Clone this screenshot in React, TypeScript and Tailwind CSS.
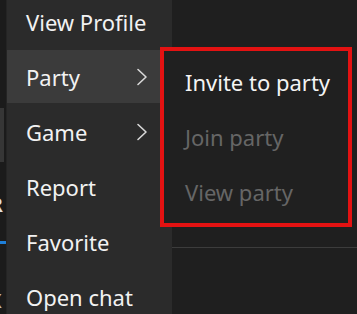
import React from "react";

const Chevron = () => (
  <svg width="12" height="18" viewBox="0 0 12 18" fill="none" className="shrink-0">
    <path d="M2 1.5 L10 9 L2 16.5" stroke="#d8d8d8" strokeWidth="1.6" strokeLinecap="round" strokeLinejoin="round" />
  </svg>
);

const font = { fontFamily: '"Noto Sans", "Open Sans", sans-serif' };

export default function App() {
  const items: { label: string; chevron?: boolean; active?: boolean }[] = [
    { label: "View Profile" },
    { label: "Party", chevron: true, active: true },
    { label: "Game", chevron: true },
    { label: "Report" },
    { label: "Favorite" },
    { label: "Open chat" },
  ];
  const sub = [
    { label: "Invite to party", enabled: true },
    { label: "Join party", enabled: false },
    { label: "View party", enabled: false },
  ];
  return (
    <div className="relative w-[357px] h-[314px] overflow-hidden bg-[#1f1f1f] flex" style={font}>
      {/* left strip */}
      <div className="w-[7px] shrink-0 bg-[#1b1b1b] flex flex-col overflow-hidden border-r border-[#242424]">
        <div className="h-[108px]" />
        <div className="h-[54px] w-[4px] bg-[#363636]" />
        <div className="h-[34px]" />
        <div className="h-[18px] text-[#e0e0e0] text-[20px] leading-[18px] -ml-[10px] font-semibold">R</div>
        <div className="h-[27px]" />
        <div className="h-[3px] w-[6px] bg-[#1e7fd8]" />
        <div className="h-[48px]" />
        <div className="h-[18px] text-[#bdbdbd] text-[20px] leading-[18px] -ml-[10px]">X</div>
      </div>
      {/* main menu */}
      <div className="w-[165px] shrink-0 bg-[#2b2b2b] -mt-[6px] flex flex-col">
        {items.map((it) => (
          <div key={it.label} className="h-[55px] shrink-0 flex flex-col justify-center">
            <div
              className={`h-[53px] flex items-center pl-[19px] pr-[24px] ${it.active ? "bg-[#3b3b3b]" : ""}`}
            >
              <span className="flex-1 text-[22px] text-[#f2f2f2] leading-none whitespace-nowrap">{it.label}</span>
              {it.chevron && <Chevron />}
            </div>
          </div>
        ))}
      </div>
      {/* right background */}
      <div className="flex-1 flex flex-col">
        <div className="h-[248px] border-b border-[#3c3c3c]" />
      </div>
      {/* submenu */}
      <div className="absolute left-[160px] top-[47px] w-[192px] h-[180px] border-[4px] border-[#e31212] bg-[#202020] flex flex-col pt-[3px]">
        {sub.map((s) => (
          <div key={s.label} className="h-[55px] shrink-0 flex items-center pl-[21px]">
            <span
              className={`text-[22px] leading-none whitespace-nowrap ${s.enabled ? "text-[#f4f4f4]" : "text-[#666666]"}`}
            >
              {s.label}
            </span>
          </div>
        ))}
      </div>
    </div>
  );
}
